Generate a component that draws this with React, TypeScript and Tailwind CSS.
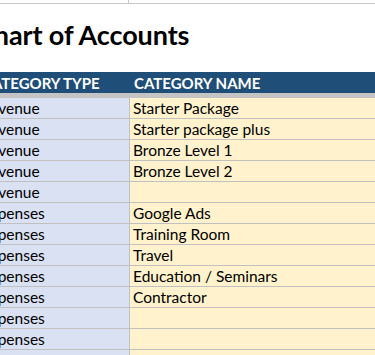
import React from "react";

const rows: [string, string][] = [
  ["Revenue", "Starter Package"],
  ["Revenue", "Starter package plus"],
  ["Revenue", "Bronze Level 1"],
  ["Revenue", "Bronze Level 2"],
  ["Revenue", ""],
  ["Expenses", "Google Ads"],
  ["Expenses", "Training Room"],
  ["Expenses", "Travel"],
  ["Expenses", "Education / Seminars"],
  ["Expenses", "Contractor"],
  ["Expenses", ""],
  ["Expenses", ""],
  ["", ""],
];

export default function App() {
  return (
    <div
      className="w-[375px] h-[355px] overflow-hidden bg-white text-black"
      style={{ fontFamily: "Lato, 'Open Sans', sans-serif" }}
    >
      <div className="-ml-[20px] w-[520px]">
        {/* top sliver row */}
        <div className="flex h-[4px] border-b border-[#c8c8c8]">
          <div className="w-[149px] shrink-0 border-r border-[#c8c8c8]" />
          <div className="flex-1" />
        </div>
        {/* title row */}
        <div className="flex h-[68px] items-center pb-[8px]">
          <span className="-ml-[4px] text-[27px] font-bold leading-none tracking-[-0.1px]">
            Chart of Accounts
          </span>
        </div>
        {/* header */}
        <div className="flex h-[21px] items-end bg-[#1f4e79] text-white text-[15px] font-bold leading-[19px]">
          <div className="w-[150px] shrink-0 pl-[2px]">CATEGORY TYPE</div>
          <div className="flex-1 pl-[4px]">CATEGORY NAME</div>
        </div>
        <div className="h-[5px] bg-[#c4c4c4]" />
        {rows.map(([t, n], i) => (
          <div
            key={i}
            className="flex h-[21px] border-b border-[#c0c0c0] text-[15.5px] leading-[19px]"
          >
            <div className="w-[150px] shrink-0 bg-[#d9e1f2] border-r border-[#c0c0c0] pl-[1px] flex items-end">
              {t}
            </div>
            <div className="flex-1 bg-[#fff2cc] pl-[3px] flex items-end">{n}</div>
          </div>
        ))}
      </div>
    </div>
  );
}
